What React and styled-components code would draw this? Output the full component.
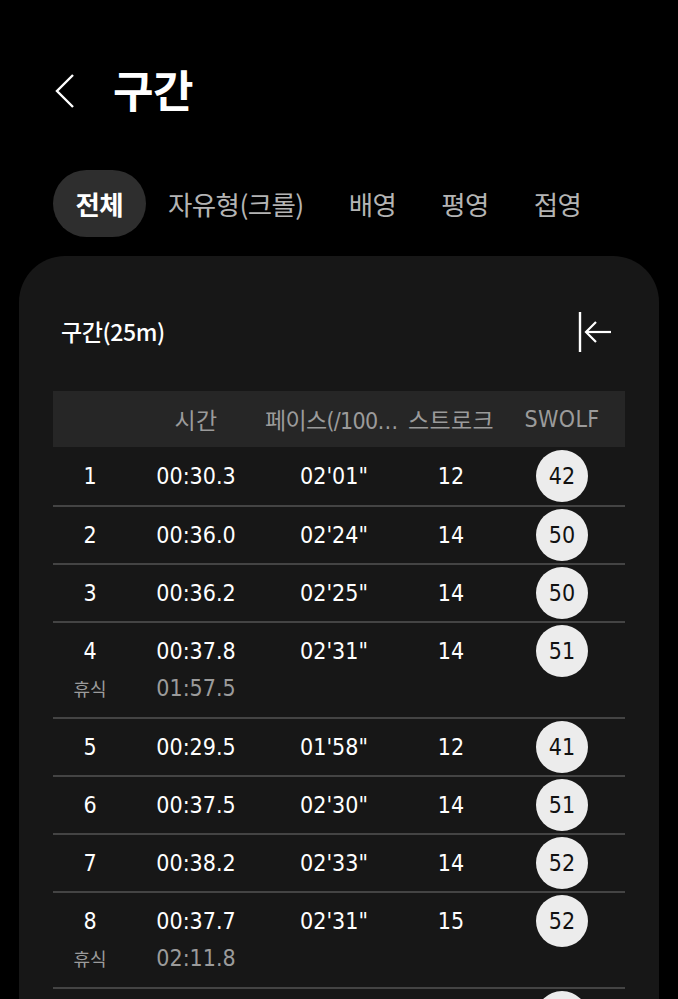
import styled, { createGlobalStyle } from "styled-components";

const GlobalStyle = createGlobalStyle`
  html, body {
    margin: 0;
    padding: 0;
    background: #000;
  }
  body {
    font-family: "Liberation Sans Narrow", "DejaVu Sans Condensed", "Noto Sans CJK KR", sans-serif;
    color: #fff;
  }
`;

const laps = [
  { no: 1, time: "00:30.3", pace: "02'01\"", stroke: 12, swolf: 42 },
  { no: 2, time: "00:36.0", pace: "02'24\"", stroke: 14, swolf: 50 },
  { no: 3, time: "00:36.2", pace: "02'25\"", stroke: 14, swolf: 50 },
  { no: 4, time: "00:37.8", pace: "02'31\"", stroke: 14, swolf: 51, rest: "01:57.5" },
  { no: 5, time: "00:29.5", pace: "01'58\"", stroke: 12, swolf: 41 },
  { no: 6, time: "00:37.5", pace: "02'30\"", stroke: 14, swolf: 51 },
  { no: 7, time: "00:38.2", pace: "02'33\"", stroke: 14, swolf: 52 },
  { no: 8, time: "00:37.7", pace: "02'31\"", stroke: 15, swolf: 52, rest: "02:11.8" },
  { no: 9, time: "00:36.9", pace: "02'28\"", stroke: 14, swolf: 51 },
];

const tabs = ["전체", "자유형(크롤)", "배영", "평영", "접영"];

const App = () => {
  return (
    <Page>
      <GlobalStyle />
      <Header>
        <BackButton>
          <svg width="24" height="36" viewBox="0 0 24 36">
            <polyline points="20,2 4,18 20,34" fill="none" stroke="#fff" strokeWidth="2.4" />
          </svg>
        </BackButton>
        <Title>구간</Title>
      </Header>

      <Tabs>
        {tabs.map((t, i) => (
          <Tab key={t} active={i === 0}>{t}</Tab>
        ))}
      </Tabs>

      <Card>
        <CardTop>
          <CardTitle>구간(25m)</CardTitle>
          <svg width="40" height="42" viewBox="0 0 40 42">
            <line x1="5" y1="1" x2="5" y2="41" stroke="#fff" strokeWidth="2.4" />
            <line x1="11" y1="21" x2="36" y2="21" stroke="#fff" strokeWidth="2.2" />
            <polyline points="21,11 11,21 21,31" fill="none" stroke="#fff" strokeWidth="2.2" />
          </svg>
        </CardTop>

        <Table>
          <HeadRow>
            <HeadCell />
            <HeadCell>시간</HeadCell>
            <HeadCell tight>페이스(/100m)</HeadCell>
            <HeadCell>스트로크</HeadCell>
            <HeadCell>SWOLF</HeadCell>
          </HeadRow>
          {laps.map((l) => (
            <Row key={l.no}>
              <Cell>{l.no}</Cell>
              <Cell>{l.time}</Cell>
              <Cell>{l.pace}</Cell>
              <Cell>{l.stroke}</Cell>
              <Cell>
                <Badge>{l.swolf}</Badge>
              </Cell>
              {l.rest && (
                <>
                  <RestLabel>휴식</RestLabel>
                  <RestTime>{l.rest}</RestTime>
                </>
              )}
            </Row>
          ))}
        </Table>
      </Card>
    </Page>
  );
};

export default App;

const Page = styled.div`
  width: 678px;
  height: 999px;
  overflow: hidden;
  background: #000;
`;

const Header = styled.div`
  display: flex;
  align-items: center;
  height: 60px;
  padding: 61px 0 0 53px;
  gap: 35px;
`;

const BackButton = styled.div`
  display: flex;
  align-items: center;
  width: 25px;
`;

const Title = styled.h1`
  margin: -4px 0 0;
  font-family: "Noto Sans CJK KR", sans-serif;
  font-size: 44px;
  font-weight: 700;
  color: #fff;
  letter-spacing: -0.6px;
`;

const Tabs = styled.div`
  display: flex;
  padding: 49px 0 0 53px;
  height: 67px;
`;

const Tab = styled.div`
  display: flex;
  align-items: center;
  padding: 0 22.5px;
  height: 67px;
  border-radius: 34px;
  font-family: "Noto Sans CJK KR", sans-serif;
  font-size: 26.5px;
  letter-spacing: -0.6px;
  font-weight: ${(p) => (p.active ? 700 : 400)};
  color: ${(p) => (p.active ? "#fff" : "#b4b4b4")};
  background: ${(p) => (p.active ? "#2e2e2e" : "transparent")};
`;

const Card = styled.div`
  margin: 19px 19px 0;
  padding: 48px 34px 0;
  background: #171717;
  border-radius: 46px 46px 0 0;
  min-height: 760px;
`;

const CardTop = styled.div`
  display: flex;
  align-items: center;
  justify-content: space-between;
  height: 56px;
  padding: 0 10px 0 8px;
`;

const CardTitle = styled.div`
  margin-top: -2px;
  font-family: "Noto Sans CJK KR", sans-serif;
  font-size: 23px;
  font-weight: 500;
  letter-spacing: -0.4px;
  color: #fff;
`;

const Table = styled.div`
  margin-top: 31px;
`;

const columns = "74px 138px 138px 96px 126px";

const HeadRow = styled.div`
  display: grid;
  grid-template-columns: ${columns};
  height: 56px;
  align-items: center;
  background: #262626;
`;

const HeadCell = styled.div`
  text-align: center;
  font-size: 23px;
  color: #9b9b9b;
  white-space: nowrap;
  overflow: hidden;
  text-overflow: ellipsis;
  letter-spacing: ${(p) => (p.tight ? "-0.7px" : "0.3px")};
`;

const Row = styled.div`
  display: grid;
  grid-template-columns: ${columns};
  grid-auto-rows: 56px 38px;
  align-items: center;
  border-top: 2px solid #444;
  ${HeadRow} + & {
    border-top: none;
    grid-auto-rows: 58px;
  }
  & > :nth-child(n + 6) {
    margin-top: -20px;
  }
`;

const Cell = styled.div`
  text-align: center;
  font-size: 23px;
  color: #fff;
  display: flex;
  justify-content: center;
`;

const Badge = styled.div`
  width: 52px;
  height: 52px;
  border-radius: 50%;
  background: #ececec;
  color: #111;
  display: flex;
  align-items: center;
  justify-content: center;
  font-size: 23px;
`;

const RestLabel = styled.div`
  text-align: center;
  font-family: "Noto Sans CJK KR", sans-serif;
  font-size: 18px;
  color: #9b9b9b;
`;

const RestTime = styled.div`
  text-align: center;
  font-size: 23px;
  color: #9b9b9b;
`;
